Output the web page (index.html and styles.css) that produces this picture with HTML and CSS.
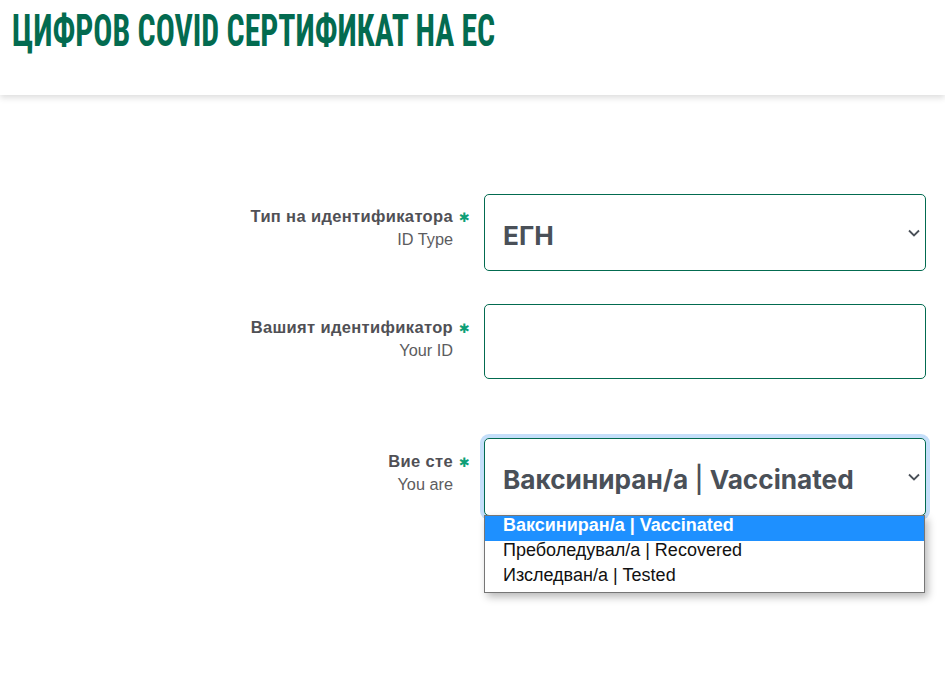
FILE: index.html
```html
<!DOCTYPE html>
<html lang="bg">
<head>
  <meta charset="UTF-8">
  <meta name="viewport" content="width=device-width, initial-scale=1.0">
  <title>Цифров COVID сертификат на ЕС</title>
  <link rel="stylesheet" href="styles.css">
</head>
<body>
  <header class="top-bar">
    <h1 class="page-title">ЦИФРОВ COVID СЕРТИФИКАТ НА ЕС</h1>
  </header>

  <form class="cert-form">
    <!-- ID type -->
    <div class="row row-type">
      <div class="label">
        <div class="label-main">Тип на идентификатора<span class="req">✱</span></div>
        <div class="label-sub">ID Type<span class="req-gap"></span></div>
      </div>
      <div class="field select-box">
        <span class="select-value">ЕГН</span>
        <svg class="chevron" viewBox="0 0 12 8"><path d="M1 1.500 6 6.500l5-5"/></svg>
      </div>
    </div>

    <!-- ID -->
    <div class="row row-id">
      <div class="label">
        <div class="label-main">Вашият идентификатор<span class="req">✱</span></div>
        <div class="label-sub">Your ID<span class="req-gap"></span></div>
      </div>
      <input class="field text-box" type="text">
    </div>

    <!-- Status, opened -->
    <div class="row row-status">
      <div class="label">
        <div class="label-main">Вие сте<span class="req">✱</span></div>
        <div class="label-sub">You are<span class="req-gap"></span></div>
      </div>
      <div class="field select-box is-open">
        <span class="select-value">Ваксиниран/а <span class="pipe">|</span> Vaccinated</span>
        <svg class="chevron" viewBox="0 0 12 8"><path d="M1 1.500 6 6.500l5-5"/></svg>
        <div class="options">
          <div class="option is-active">Ваксиниран/а | Vaccinated</div>
          <div class="option">Преболедувал/а | Recovered</div>
          <div class="option">Изследван/а | Tested</div>
        </div>
      </div>
    </div>
  </form>
</body>
</html>
```

FILE: styles.css
```css
body {
  margin: 0;
  min-height: 100vh;
  background-color: #ffffff;
  color: #4a4a4f;
  font-family: 'Inter', 'Noto Sans', sans-serif;
}

.top-bar {
  height: 95px;
  box-sizing: border-box;
  padding: 4px 0 0 12px;
  background-color: #ffffff;
  box-shadow: 0 3px 6px rgba(0, 0, 0, 0.13);
  overflow: hidden;
}

.page-title {
  margin: 0;
  width: 800px;
  font-family: 'Roboto Condensed', 'Liberation Sans', sans-serif;
  font-size: 45px;
  line-height: 54px;
  font-weight: 700;
  color: #036b50;
  white-space: nowrap;
  transform: scaleX(0.705);
  transform-origin: left top;
}

.cert-form {
  padding: 99px 19px 0 0;
}

.row {
  display: grid;
  grid-template-columns: 470px 442px;
  column-gap: 14px;
  justify-content: end;
}

.row-type { height: 77px; margin-bottom: 33px; }
.row-id { height: 75px; margin-bottom: 59px; }
.row-status { height: 78px; }

.label {
  padding-top: 11px;
  text-align: right;
  font-family: 'Liberation Sans', sans-serif;
  font-size: 16.300px;
  line-height: 23px;
}

.row-id .label,
.row-status .label {
  padding-top: 12px;
}

.label-main {
  font-size: 16.500px;
  font-weight: 700;
  letter-spacing: 0.35px;
  color: #505055;
}

.label-sub {
  color: #5c5c60;
  margin-top: -1px;
}

.req {
  display: inline-block;
  box-sizing: border-box;
  width: 17px;
  padding-left: 1px;
  font-family: 'DejaVu Sans', sans-serif;
  font-size: 13px;
  font-weight: 400;
  letter-spacing: 0;
  color: #0e9f77;
}

.req-gap {
  display: inline-block;
  width: 17px;
}

.field {
  box-sizing: border-box;
  width: 442px;
  height: 100%;
  background-color: #ffffff;
  border: 1px solid #036b50;
  border-radius: 5px;
}

.select-box {
  position: relative;
  display: flex;
  align-items: center;
  padding: 5px 0 0 18px;
}

.select-value {
  font-size: 26.200px;
  font-weight: 700;
  color: #4a5058;
}

.pipe {
  font-weight: 500;
}

.text-box {
  display: block;
  outline: none;
}

.chevron {
  position: absolute;
  right: 5px;
  top: 50%;
  width: 12px;
  height: 8px;
  margin-top: -4px;
  fill: none;
  stroke: #4a5058;
  stroke-width: 1.800;
}

.is-open {
  box-shadow: 0 0 0 4px #c5dffa;
}

.options {
  position: absolute;
  left: -1px;
  top: 76px;
  width: 441px;
  box-sizing: border-box;
  padding-bottom: 1px;
  background-color: #ffffff;
  border: 1px solid #767676;
  box-shadow: 3px 4px 8px rgba(0, 0, 0, 0.28);
  font-family: 'Liberation Sans', sans-serif;
}

.option {
  height: 25px;
  padding-left: 18px;
  font-size: 18px;
  line-height: 19px;
  color: #111111;
}

.is-active {
  background-color: #1e90ff;
  color: #ffffff;
  font-weight: 700;
}
```
